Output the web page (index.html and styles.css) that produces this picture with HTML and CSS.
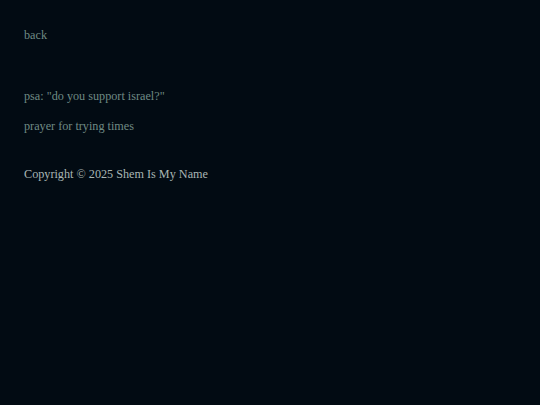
FILE: index.html
```html
<!DOCTYPE html>
<html>
<head>
<meta charset="utf-8">
<link rel="stylesheet" href="styles.css">
</head>
<body>
<div class="page">
  <nav class="nav"><a class="link" href="#">back</a></nav>
  <ul class="posts">
    <li><a class="link" href="#">psa: "do you support israel?"</a></li>
    <li><a class="link" href="#">prayer for trying times</a></li>
  </ul>
  <footer class="footer">Copyright © 2025 Shem Is My Name</footer>
</div>
</body>
</html>
```
FILE: styles.css
```css
html, body {
  margin: 0;
  padding: 0;
  background: #020b13;
  height: 100%;
}
.page {
  padding: 28px 24px;
  font-family: "Liberation Serif", "Times New Roman", serif;
  font-size: 12.2px;
  line-height: 14px;
  display: flex;
  flex-direction: column;
}
.link {
  color: #6f8a84;
  text-decoration: none;
}
.nav {
  margin-bottom: 47px;
}
.posts {
  list-style: none;
  margin: 0;
  padding: 0;
  display: flex;
  flex-direction: column;
  gap: 16px;
}
.footer {
  margin-top: 34px;
  color: #a9b6b4;
}
```
